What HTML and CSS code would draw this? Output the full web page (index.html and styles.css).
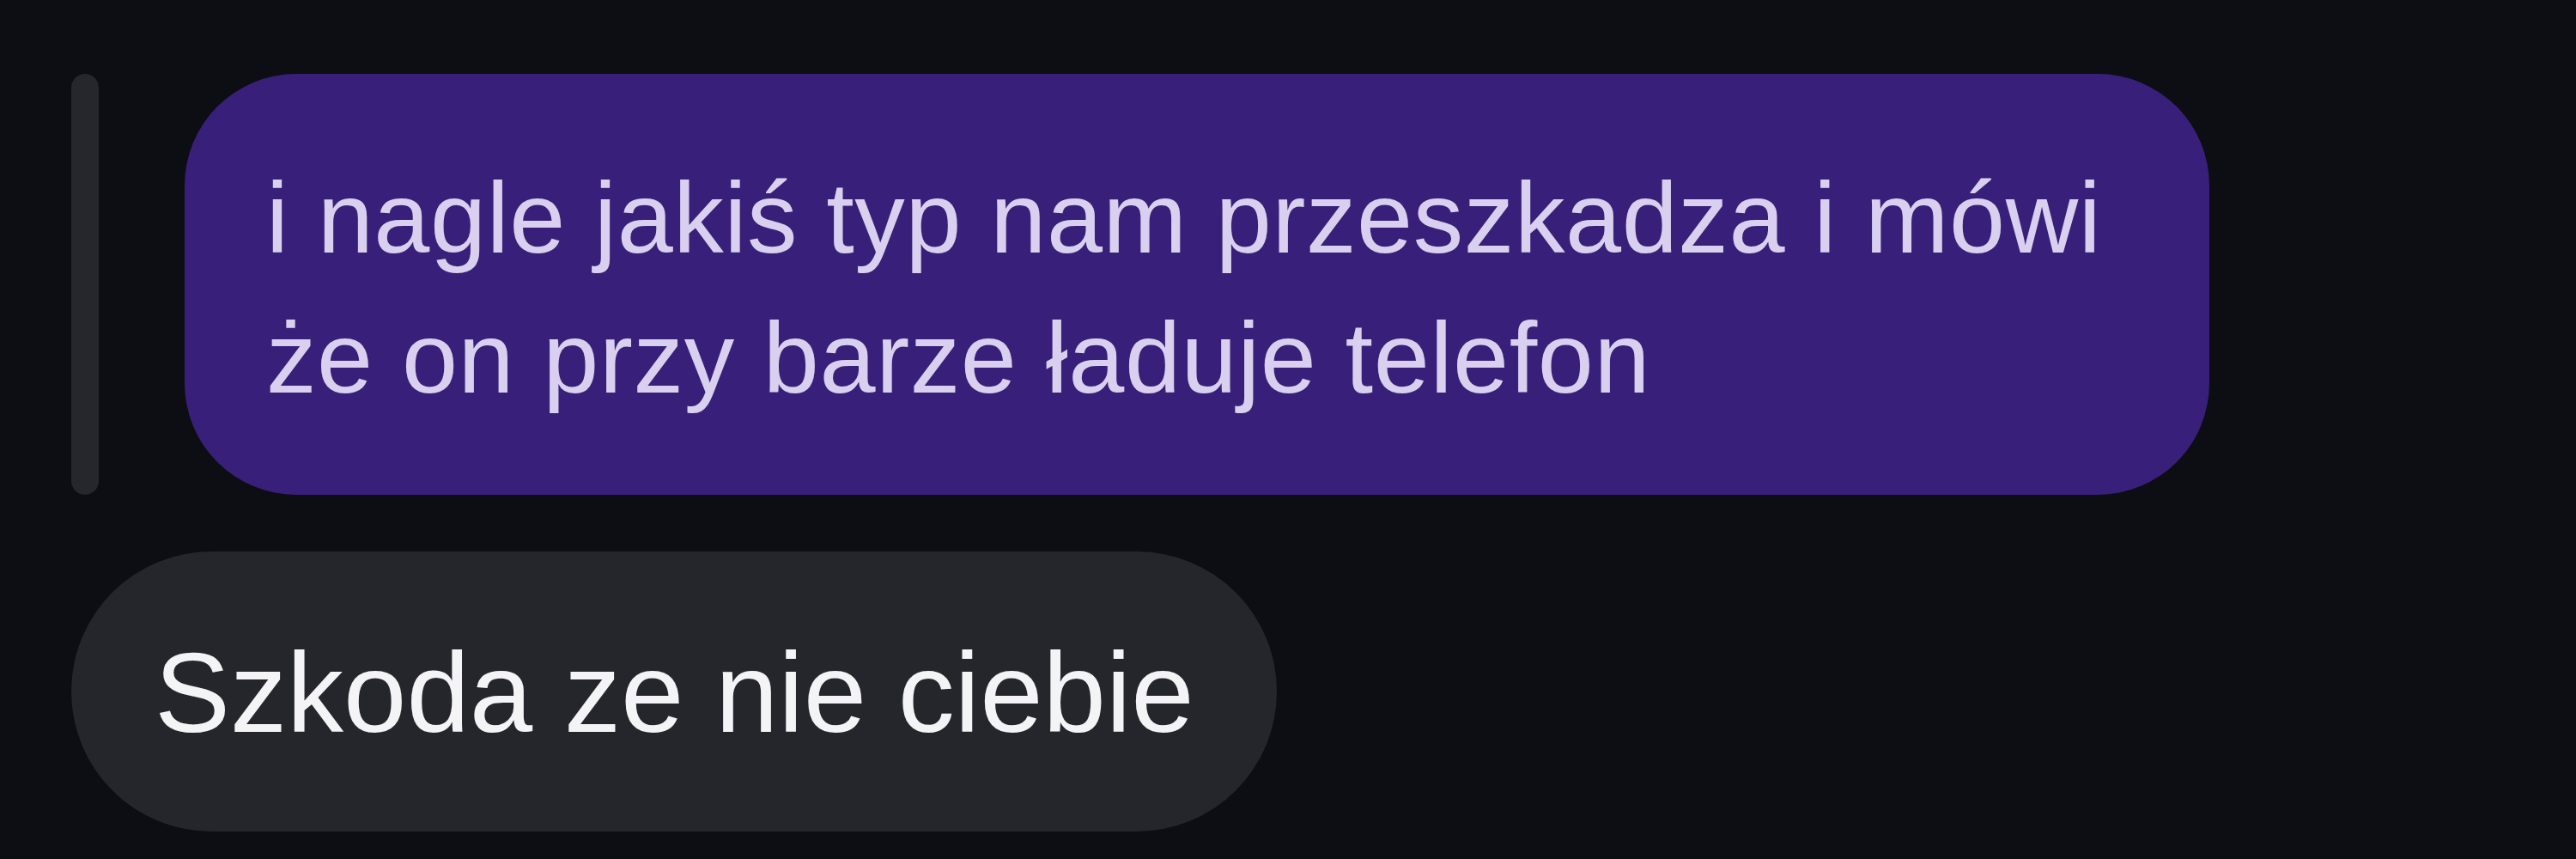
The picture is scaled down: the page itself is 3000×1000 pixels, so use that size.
FILE: index.html
```html
<!DOCTYPE html>
<html lang="pl">
<head>
<meta charset="utf-8">
<title>Chat</title>
<link rel="stylesheet" href="styles.css">
</head>
<body>
  <main class="chat">
    <div class="reply-row">
      <div class="reply-bar"></div>
      <div class="bubble bubble-quoted">i nagle jakiś typ nam przeszkadza i mówi że on przy barze ładuje telefon</div>
    </div>
    <div class="message-row">
      <div class="bubble bubble-own">Szkoda ze nie ciebie</div>
    </div>
  </main>
</body>
</html>
```

FILE: styles.css
```css
html, body {
  margin: 0;
  padding: 0;
  background: #0c0e13;
  width: 3000px;
  height: 1000px;
  overflow: hidden;
}

.chat {
  display: flex;
  flex-direction: column;
  align-items: flex-start;
  padding: 86px 0 0 83px;
  font-family: "Liberation Sans", Arial, sans-serif;
}

.reply-row {
  display: flex;
  align-items: stretch;
  gap: 100px;
}

.reply-bar {
  width: 32px;
  border-radius: 16px;
  background: #25272c;
}

.bubble {
  box-sizing: border-box;
}

.bubble-quoted {
  width: 2358px;
  padding: 86px 95px 78px;
  border-radius: 130px;
  background: #38207a;
  color: #d8d0ee;
  font-size: 117px;
  line-height: 163px;
  letter-spacing: 0.6px;
}

.message-row {
  margin-top: 66px;
  display: flex;
}

.bubble-own {
  padding: 89px 96px 85px 97px;
  border-radius: 163px;
  background: #24262b;
  color: #f4f4f6;
  font-size: 132px;
  line-height: 152px;
  white-space: nowrap;
}
```
